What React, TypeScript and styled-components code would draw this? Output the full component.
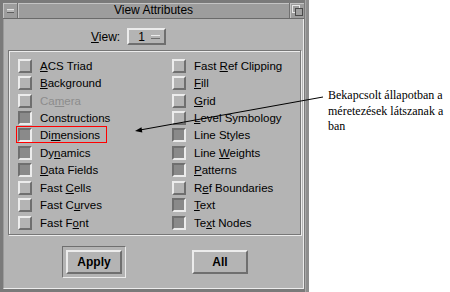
import React from 'react';
import styled, { createGlobalStyle, css } from 'styled-components';

const GlobalStyle = createGlobalStyle`
  html, body {
    margin: 0;
    padding: 0;
    background: #ffffff;
  }
  body {
    font-family: 'Liberation Sans', Arial, sans-serif;
  }
`;

type Item = { label: string; key?: number; on?: boolean; disabled?: boolean };

const leftItems: Item[] = [
  { label: 'ACS Triad', key: 0 },
  { label: 'Background', key: 0 },
  { label: 'Camera', key: 2, disabled: true },
  { label: 'Constructions', on: true },
  { label: 'Dimensions', key: 2, on: true },
  { label: 'Dynamics', key: 2, on: true },
  { label: 'Data Fields', key: 0, on: true },
  { label: 'Fast Cells', key: 5 },
  { label: 'Fast Curves', key: 6 },
  { label: 'Fast Font', key: 6 },
];

const rightItems: Item[] = [
  { label: 'Fast Ref Clipping', key: 5 },
  { label: 'Fill', key: 0 },
  { label: 'Grid', key: 0 },
  { label: 'Level Symbology', key: 0 },
  { label: 'Line Styles', on: true },
  { label: 'Line Weights', key: 5, on: true },
  { label: 'Patterns', key: 0, on: true },
  { label: 'Ref Boundaries', key: 1 },
  { label: 'Text', key: 0, on: true },
  { label: 'Text Nodes', key: 2, on: true },
];

const Mnemonic: React.FC<{ text: string; at?: number }> = ({ text, at }) => {
  if (at === undefined) return <>{text}</>;
  return (
    <>
      {text.slice(0, at)}
      <u>{text[at]}</u>
      {text.slice(at + 1)}
    </>
  );
};

export default function App() {
  return (
    <>
      <GlobalStyle />
      <Page>
        <Window>
          <TitleBar>
            <MenuButton>
              <Dash />
            </MenuButton>
            <Title>View Attributes</Title>
            <MaxButton>
              <svg width="11" height="11" viewBox="0 0 11 11">
                <rect x="0.5" y="0.5" width="7" height="7" fill="none" stroke="#e8e8e8" />
                <rect x="3.5" y="3.5" width="7" height="7" fill="#a0a0a0" stroke="#4a4a4a" />
              </svg>
            </MaxButton>
          </TitleBar>
          <Body>
            <ViewRow>
              <span>
                <u>V</u>iew:
              </span>
              <OptionButton>
                <span>1</span>
                <OptionMark />
              </OptionButton>
            </ViewRow>
            <Group>
              <Grid>
                {[...leftItems, ...rightItems].map((item) => (
                  <Row key={item.label} $disabled={item.disabled}>
                    <Check $on={item.on} />
                    <span>
                      <Mnemonic text={item.label} at={item.key} />
                    </span>
                  </Row>
                ))}
              </Grid>
            </Group>
            <ButtonRow>
              <DefaultRing>
                <PushButton>Apply</PushButton>
              </DefaultRing>
              <PushButton>All</PushButton>
            </ButtonRow>
          </Body>
        </Window>
        <Note>
          Bekapcsolt állapotban a méretezések látszanak a ban
        </Note>
        <Overlay width="450" height="292" viewBox="0 0 450 292">
          <rect x="16.5" y="126.5" width="90" height="16" fill="none" stroke="#ff0000" strokeWidth="1" />
          <line x1="323" y1="97" x2="140" y2="130" stroke="#000" strokeWidth="1" />
          <polygon points="135,131 142.3,132.4 141.5,127.2" fill="#000" />
        </Overlay>
      </Page>
    </>
  );
}

const bevelUp = css`
  border-style: solid;
  border-width: 2px;
  border-color: #ececec #6f6f6f #6f6f6f #ececec;
`;

const bevelDown = css`
  border-style: solid;
  border-width: 2px;
  border-color: #6f6f6f #ececec #ececec #6f6f6f;
`;

const Page = styled.div`
  position: relative;
  display: flex;
  width: 450px;
  height: 292px;
  overflow: hidden;
  background: #ffffff;
`;

const Window = styled.div`
  width: 309px;
  height: 292px;
  flex-shrink: 0;
  box-sizing: border-box;
  display: flex;
  flex-direction: column;
  padding: 3px 5px 3px 3px;
  background: #7a7a7a;
  box-shadow: inset -3px 0 0 #8e8e8e, inset -4px 0 0 #a8a8a8;
`;

const TitleBar = styled.div`
  display: flex;
  height: 15px;
  background: #9d9d9d;
  border-bottom: 1px solid #6a6a6a;
`;

const MenuButton = styled.div`
  width: 15px;
  box-sizing: border-box;
  display: flex;
  align-items: center;
  justify-content: center;
  border-right: 1px solid #707070;
  box-shadow: inset 1px 1px 0 #c4c4c4;
`;

const Dash = styled.div`
  width: 7px;
  height: 2px;
  background: #b8b8b8;
  border-top: 1px solid #e4e4e4;
  border-bottom: 1px solid #5e5e5e;
`;

const Title = styled.div`
  flex: 1;
  text-align: center;
  font-size: 12px;
  line-height: 15px;
  color: #000;
  box-shadow: inset 1px 1px 0 #c4c4c4;
  border-right: 1px solid #707070;
`;

const MaxButton = styled.div`
  width: 14px;
  display: flex;
  align-items: center;
  justify-content: center;
  box-shadow: inset 1px 1px 0 #c4c4c4;
`;

const Body = styled.div`
  flex: 1;
  display: flex;
  flex-direction: column;
  background: #b4b4b4;
  border-right: 1px solid #ececec;
  border-bottom: 1px solid #ececec;
  border-left: 1px solid #9a9a9a;
`;

const ViewRow = styled.div`
  display: flex;
  align-items: center;
  gap: 7px;
  height: 17px;
  margin-top: 9px;
  padding-left: 87px;
  font-size: 12px;
  color: #000;
`;

const OptionButton = styled.div`
  ${bevelUp};
  width: 39px;
  height: 17px;
  box-sizing: border-box;
  display: flex;
  align-items: center;
  justify-content: space-between;
  padding: 0 4px 0 9px;
  font-size: 12px;
`;

const OptionMark = styled.div`
  width: 9px;
  height: 2px;
  background: #b4b4b4;
  border-top: 1px solid #ececec;
  border-bottom: 1px solid #6f6f6f;
`;

const Group = styled.div`
  margin: 5px 2px 0 4px;
  height: 185px;
  box-sizing: border-box;
  border: 1px solid #777777;
  box-shadow: inset 1px 1px 0 #ececec, 1px 1px 0 #ececec;
`;

const Grid = styled.div`
  display: grid;
  grid-auto-flow: column;
  grid-template-columns: 154px 1fr;
  grid-template-rows: repeat(10, 17.45px);
  padding: 6px 0 0 9px;
`;

const Row = styled.div<{ $disabled?: boolean }>`
  display: flex;
  align-items: center;
  gap: 8px;
  font-size: 11.5px;
  white-space: nowrap;
  color: ${(p) => (p.$disabled ? '#8c8c8c' : '#000')};
`;

const Check = styled.div<{ $on?: boolean }>`
  ${(p) => (p.$on ? bevelDown : bevelUp)};
  width: 14px;
  height: 14px;
  box-sizing: border-box;
  flex-shrink: 0;
  background: ${(p) => (p.$on ? '#8a8a8a' : '#b4b4b4')};
`;

const ButtonRow = styled.div`
  flex: 1;
  display: flex;
  align-items: center;
  gap: 66px;
  padding-left: 58px;
`;

const DefaultRing = styled.div`
  padding: 3px;
  border: 1px solid;
  border-color: #6f6f6f #ececec #ececec #6f6f6f;
`;

const PushButton = styled.div`
  ${bevelUp};
  width: 56px;
  height: 24px;
  box-sizing: border-box;
  display: flex;
  align-items: center;
  justify-content: center;
  font-size: 12px;
  font-weight: bold;
  color: #000;
`;

const Note = styled.div`
  width: 118px;
  padding: 88px 0 0 19px;
  font-family: 'Liberation Serif', 'Times New Roman', serif;
  font-size: 12px;
  line-height: 15.5px;
  color: #000;
`;

const Overlay = styled.svg`
  position: absolute;
  left: 0;
  top: 0;
  pointer-events: none;
`;
